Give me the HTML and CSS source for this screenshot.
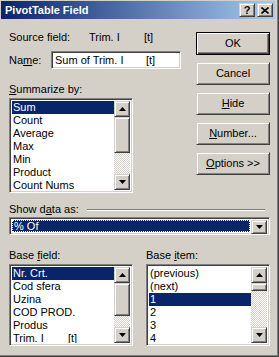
FILE: index.html
```html
<!DOCTYPE html>
<html lang="en">
<head>
    <meta charset="UTF-8">
    <title>PivotTable Field</title>
    <link rel="stylesheet" href="styles.css">
</head>
<body>
    <div class="window">
        <div class="titlebar">
            <span class="title">PivotTable Field</span>
            <div class="caption-buttons">
                <span class="cap-btn raised help">?</span>
                <span class="cap-btn raised close">
                    <svg width="8" height="7" viewBox="0 0 8 7"><path d="M0.5 0.5l7 6M7.5 0.5l-7 6" stroke="#000" stroke-width="1.6"/></svg>
                </span>
            </div>
        </div>

        <div class="content">
            <div class="top">
                <div class="left">
                    <div class="row source">
                        <span class="lbl-source">Source field:</span>
                        <span class="val-source">Trim. I</span>
                        <span>[t]</span>
                    </div>
                    <div class="row name">
                        <span class="lbl-name">Na<u>m</u>e:</span>
                        <div class="textbox sunken"><span class="name-part">Sum of Trim. I</span><span>[t]</span></div>
                    </div>
                    <div class="label"><u>S</u>ummarize by:</div>
                    <div class="listbox sunken summarize">
                        <ul class="items">
                            <li class="selected">Sum</li>
                            <li>Count</li>
                            <li>Average</li>
                            <li>Max</li>
                            <li>Min</li>
                            <li>Product</li>
                            <li>Count Nums</li>
                        </ul>
                        <div class="scrollbar">
                            <span class="sb-btn raised"><svg width="7" height="4"><path d="M0 4h7L3.5 0z"/></svg></span>
                            <span class="sb-thumb raised thumb-a"></span>
                            <span class="sb-track"></span>
                            <span class="sb-btn raised"><svg width="7" height="4"><path d="M0 0h7L3.5 4z"/></svg></span>
                        </div>
                    </div>
                </div>

                <div class="buttons">
                    <button class="btn raised default">OK</button>
                    <button class="btn raised">Cancel</button>
                    <button class="btn raised"><u>H</u>ide</button>
                    <button class="btn raised"><u>N</u>umber...</button>
                    <button class="btn raised"><u>O</u>ptions &gt;&gt;</button>
                </div>
            </div>

            <div class="show-row">
                <span>Show d<u>a</u>ta as:</span>
                <span class="etched"></span>
            </div>
            <div class="combo sunken">
                <span class="combo-value">% Of</span>
                <span class="sb-btn raised combo-arrow"><svg width="7" height="4"><path d="M0 0h7L3.5 4z"/></svg></span>
            </div>

            <div class="bottom">
                <div class="col">
                    <div class="label">Base <u>f</u>ield:</div>
                    <div class="listbox sunken base">
                        <ul class="items">
                            <li class="selected">Nr. Crt.</li>
                            <li>Cod sfera</li>
                            <li>Uzina</li>
                            <li>COD PROD.</li>
                            <li>Produs</li>
                            <li><span class="name-short">Trim. I</span>[t]</li>
                        </ul>
                        <div class="scrollbar">
                            <span class="sb-btn raised"><svg width="7" height="4"><path d="M0 4h7L3.5 0z"/></svg></span>
                            <span class="sb-thumb raised thumb-b"></span>
                            <span class="sb-track"></span>
                            <span class="sb-btn raised"><svg width="7" height="4"><path d="M0 0h7L3.5 4z"/></svg></span>
                        </div>
                    </div>
                </div>
                <div class="col col-right">
                    <div class="label">Base <u>i</u>tem:</div>
                    <div class="listbox sunken base">
                        <ul class="items">
                            <li>(previous)</li>
                            <li>(next)</li>
                            <li class="selected">1</li>
                            <li>2</li>
                            <li>3</li>
                            <li>4</li>
                        </ul>
                        <div class="scrollbar">
                            <span class="sb-btn raised"><svg width="7" height="4"><path d="M0 4h7L3.5 0z"/></svg></span>
                            <span class="sb-thumb raised thumb-c"></span>
                            <span class="sb-track"></span>
                            <span class="sb-btn raised"><svg width="7" height="4"><path d="M0 0h7L3.5 4z"/></svg></span>
                        </div>
                    </div>
                </div>
            </div>
        </div>
    </div>
</body>
</html>
```

FILE: styles.css
```css
* {
    box-sizing: border-box;
}

body {
    margin: 0;
    font-family: "Liberation Sans", Arial, sans-serif;
    font-size: 11px;
    line-height: 13px;
    color: #000;
    background: #d4d0c8;
}

.window {
    width: 279px;
    height: 357px;
    padding: 1px 3px 3px 1px;
    background: #d4d0c8;
    border-right: 1px solid #404040;
    border-bottom: 1px solid #404040;
    box-shadow: inset -1px -1px #808080;
}

/* title bar */
.titlebar {
    height: 18px;
    display: flex;
    align-items: center;
    justify-content: space-between;
    padding: 0 2px 0 4px;
    background: linear-gradient(to right, #0a246a, #a6caf0);
}

.title {
    color: #fff;
    font-weight: bold;
}

.caption-buttons {
    display: flex;
    gap: 2px;
}

.cap-btn {
    width: 16px;
    height: 14px;
    display: flex;
    align-items: center;
    justify-content: center;
    font-weight: bold;
    font-size: 11px;
}

/* 3d borders */
.raised {
    background: #d4d0c8;
    border: 1px solid;
    border-color: #d4d0c8 #404040 #404040 #d4d0c8;
    box-shadow: inset 1px 1px #fff, inset -1px -1px #808080;
}

.sunken {
    background: #fff;
    border: 1px solid;
    border-color: #808080 #fff #fff #808080;
    box-shadow: inset 1px 1px #404040, inset -1px -1px #d4d0c8;
}

.content {
    padding: 12px 5px 0 8px;
}

.top {
    display: flex;
    justify-content: space-between;
}

.left {
    width: 180px;
}

.row {
    display: flex;
    align-items: center;
}

.lbl-source {
    width: 80px;
}

.val-source {
    width: 55px;
}

.name {
    margin-top: 7px;
}

.lbl-name {
    width: 42px;
}

.textbox {
    width: 130px;
    height: 18px;
    padding: 2px 3px;
    display: flex;
}

.name-part {
    width: 91px;
}

.label {
    margin-top: 14px;
}

/* list boxes */
.listbox {
    display: flex;
    padding: 2px;
    overflow: hidden;
    margin-top: 2px;
}

.summarize {
    width: 124px;
    height: 95px;
}

.items {
    flex: 1;
    list-style: none;
    margin: 0;
    padding: 0;
    overflow: hidden;
}

.items li {
    height: 13px;
    padding-left: 1px;
    white-space: nowrap;
}

.items li.selected {
    background: #0a246a;
    color: #fff;
}

.name-short {
    display: inline-block;
    width: 55px;
}

.scrollbar {
    width: 16px;
    display: flex;
    flex-direction: column;
}

.sb-btn {
    width: 16px;
    height: 16px;
    flex: none;
    display: flex;
    align-items: center;
    justify-content: center;
}

.sb-thumb {
    flex: none;
}

.thumb-a {
    height: 36px;
}

.thumb-b {
    height: 33px;
}

.thumb-c {
    height: 8px;
}

.sb-track {
    flex: 1;
    background: repeating-conic-gradient(#d4d0c8 0 25%, #fff 0 50%) 0 0 / 2px 2px;
}

/* buttons */
.buttons {
    display: flex;
    flex-direction: column;
    gap: 7px;
    margin-top: 1px;
}

.btn {
    width: 74px;
    height: 23px;
    padding: 0;
    font: inherit;
    color: #000;
}

.btn.default {
    border-color: #000;
    box-shadow: inset 1px 1px #fff, inset -1px -1px #404040, inset -2px -2px #808080;
}

/* show data as */
.show-row {
    display: flex;
    align-items: center;
    margin-top: 10px;
}

.etched {
    flex: 1;
    height: 2px;
    margin: 1px 5px 0 8px;
    border-top: 1px solid #808080;
    border-bottom: 1px solid #fff;
}

.combo {
    margin-top: 1px;
    height: 18px;
    padding: 2px;
    display: flex;
}

.combo-value {
    flex: 1;
    background: #0a246a;
    color: #fff;
    outline: 1px dotted #fff;
    outline-offset: -1px;
    padding-left: 2px;
    line-height: 12px;
    margin-right: 1px;
}

.combo-arrow {
    height: 14px;
}

/* base field / item */
.bottom {
    display: flex;
    justify-content: space-between;
}

.col {
    width: 124px;
}

.col .label {
    margin-top: 14px;
}

.base {
    height: 82px;
}
```
